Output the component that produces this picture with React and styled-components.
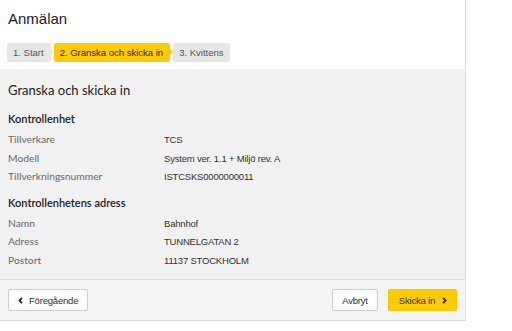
import React from 'react'
import styled, { createGlobalStyle } from 'styled-components'

const GlobalStyle = createGlobalStyle`
  body {
    margin: 0;
    background: #ffffff;
    font-family: "Liberation Sans", Arial, sans-serif;
  }
`

const Panel = styled.div`
  width: 465px;
  border-right: 1px solid #dcdcdc;
  border-bottom: 1px solid #dcdcdc;
  background: #ffffff;
`

const Header = styled.div`
  height: 69px;
  box-sizing: border-box;
  padding: 10px 7px 0 7px;
`

const Title = styled.h1`
  margin: 0 0 0 1px;
  font-family: "Liberation Sans", Arial, sans-serif;
  font-weight: normal;
  font-size: 15px;
  line-height: 18px;
  color: #222;
`

const Steps = styled.div`
  display: flex;
  gap: 3px;
  margin-top: 15px;
`

const Step = styled.div`
  position: relative;
  height: 19px;
  line-height: 19px;
  padding: 0 7px 0 6px;
  border-radius: 2px;
  font-size: 9.5px;
  color: ${p => (p.active ? '#2b2400' : '#555')};
  background: ${p => (p.active ? '#ffcb05' : '#e6e6e6')};

  &::after {
    content: '';
    display: ${p => (p.last ? 'none' : 'block')};
    position: absolute;
    right: -3px;
    top: 6px;
    border-top: 3.5px solid transparent;
    border-bottom: 3.5px solid transparent;
    border-left: 3px solid ${p => (p.active ? '#ffcb05' : '#e6e6e6')};
  }
`

const Content = styled.div`
  height: 210px;
  box-sizing: border-box;
  background: #f1f1f1;
  padding: 13px 8px 0 8px;
`

const Heading = styled.h2`
  margin: 0 0 14px 0;
  font-family: Lato, "Open Sans", sans-serif;
  font-weight: normal;
  font-size: 13px;
  line-height: 16px;
  color: #222;
`

const Section = styled.div`
  margin-bottom: 10px;
`

const SectionTitle = styled.h3`
  margin: 0 0 4px 0;
  font-family: Lato, "Open Sans", sans-serif;
  font-weight: 600;
  font-size: 11px;
  line-height: 14px;
  color: #222;
`

const Row = styled.div`
  display: grid;
  grid-template-columns: 156px 1fr;
  height: 18.5px;
  align-items: baseline;
  line-height: 18px;
`

const Label = styled.span`
  font-family: Lato, "Open Sans", sans-serif;
  font-size: 10.3px;
  color: #6a6a6a;
`

const Value = styled.span`
  font-family: "Liberation Sans", Arial, sans-serif;
  font-size: 9.5px;
  letter-spacing: -0.2px;
  color: #333;
`

const Footer = styled.div`
  display: flex;
  align-items: center;
  gap: 10px;
  height: 41px;
  box-sizing: border-box;
  border-top: 1px solid #dcdcdc;
  background: #f4f4f4;
  padding: 0 8px;
`

const Spacer = styled.div`
  flex: 1;
`

const Button = styled.button`
  display: flex;
  align-items: center;
  gap: ${p => (p.primary ? '7px' : '6px')};
  height: 22px;
  box-sizing: border-box;
  padding: 0 9px 0 ${p => (p.primary ? '10px' : '9px')};
  border: 1px solid ${p => (p.primary ? '#f7c600' : '#cfcfcf')};
  border-radius: 2px;
  background: ${p => (p.primary ? '#ffcb05' : '#ffffff')};
  color: #333;
  font-family: "Liberation Sans", Arial, sans-serif;
  font-size: 9.5px;
  letter-spacing: -0.2px;
  cursor: pointer;
`

const Chevron = ({ dir }) => (
  <svg width="5" height="7" viewBox="0 0 5 7">
    <path
      d={dir === 'left' ? 'M4 0.8 L1.4 3.5 L4 6.2' : 'M1 0.8 L3.6 3.5 L1 6.2'}
      fill="none"
      stroke="#222"
      strokeWidth="1.8"
    />
  </svg>
)

const sections = [
  {
    title: 'Kontrollenhet',
    rows: [
      ['Tillverkare', 'TCS'],
      ['Modell', 'System ver. 1.1 + Miljö rev. A'],
      ['Tillverkningsnummer', 'ISTCSKS0000000011']
    ]
  },
  {
    title: 'Kontrollenhetens adress',
    rows: [
      ['Namn', 'Bahnhof'],
      ['Adress', 'TUNNELGATAN 2'],
      ['Postort', '11137 STOCKHOLM']
    ]
  }
]

export default function App() {
  return (
    <>
      <GlobalStyle />
      <Panel>
        <Header>
          <Title>Anmälan</Title>
          <Steps>
            <Step>1. Start</Step>
            <Step active>2. Granska och skicka in</Step>
            <Step last>3. Kvittens</Step>
          </Steps>
        </Header>
        <Content>
          <Heading>Granska och skicka in</Heading>
          {sections.map(s => (
            <Section key={s.title}>
              <SectionTitle>{s.title}</SectionTitle>
              {s.rows.map(([label, value]) => (
                <Row key={label}>
                  <Label>{label}</Label>
                  <Value>{value}</Value>
                </Row>
              ))}
            </Section>
          ))}
        </Content>
        <Footer>
          <Button>
            <Chevron dir="left" />
            Föregående
          </Button>
          <Spacer />
          <Button>Avbryt</Button>
          <Button primary>
            Skicka in
            <Chevron dir="right" />
          </Button>
        </Footer>
      </Panel>
    </>
  )
}
